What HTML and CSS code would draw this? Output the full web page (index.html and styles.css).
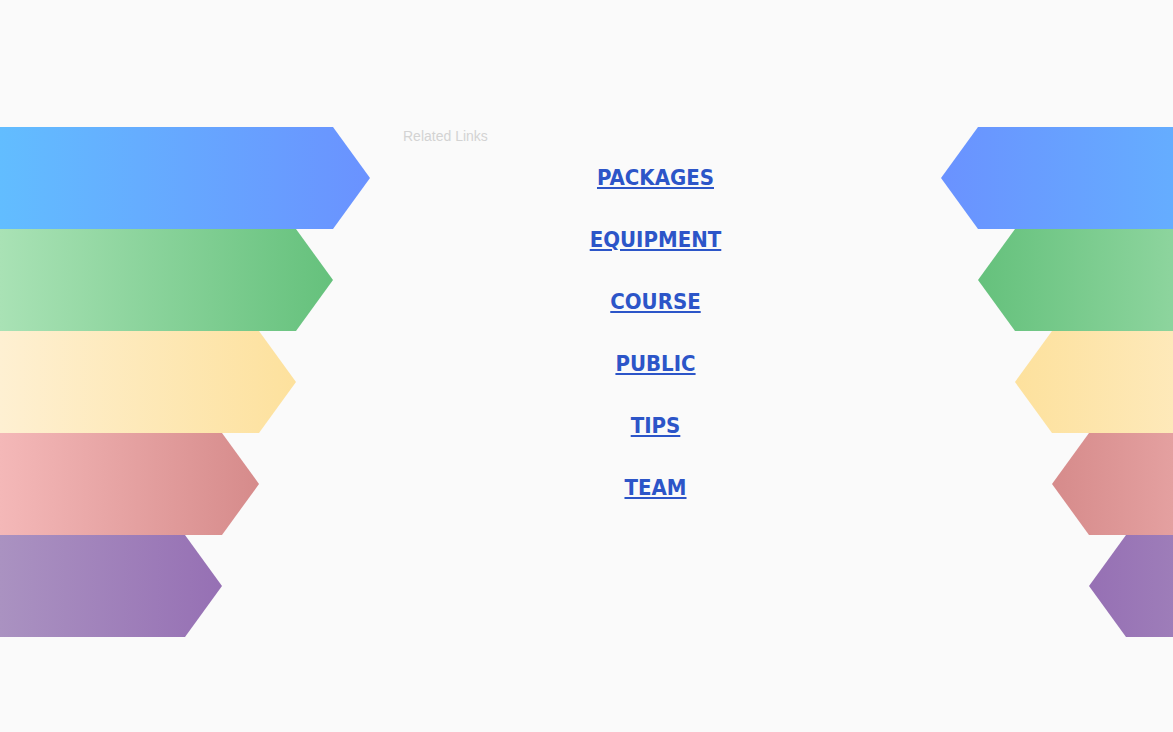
FILE: index.html
```html
<!DOCTYPE html>
<html lang="en">
<head>
<meta charset="utf-8">
<title>Related Links</title>
<link rel="stylesheet" href="styles.css">
</head>
<body>
<div class="page">
  <div class="bars bars-left">
    <div class="bar bar-l bar-w1 blue-l"></div>
    <div class="bar bar-l bar-w2 green-l"></div>
    <div class="bar bar-l bar-w3 yellow-l"></div>
    <div class="bar bar-l bar-w4 red-l"></div>
    <div class="bar bar-l bar-w5 purple-l"></div>
  </div>
  <div class="center">
    <div class="related">Related Links</div>
    <ul class="links">
      <li><a href="#">PACKAGES</a></li>
      <li><a href="#">EQUIPMENT</a></li>
      <li><a href="#">COURSE</a></li>
      <li><a href="#">PUBLIC</a></li>
      <li><a href="#">TIPS</a></li>
      <li><a href="#">TEAM</a></li>
    </ul>
  </div>
  <div class="bars bars-right">
    <div class="bar bar-r bar-w1 off1 blue-r"></div>
    <div class="bar bar-r bar-w2 off2 green-r"></div>
    <div class="bar bar-r bar-w3 off3 yellow-r"></div>
    <div class="bar bar-r bar-w4 off4 red-r"></div>
    <div class="bar bar-r bar-w5 off5 purple-r"></div>
  </div>
</div>
</body>
</html>
```
FILE: styles.css
```css
html, body {
  margin: 0;
  padding: 0;
  background: #fafafa;
}
.page {
  display: grid;
  grid-template-columns: 370px 571px 1fr;
  padding-top: 127px;
}
.bars {
  display: flex;
  flex-direction: column;
}
.bars-left { align-items: flex-start; }
.bars-right {
  align-items: flex-start;
  overflow: hidden;
}
.bar { height: 102px; flex-shrink: 0; }
.bar-w1 { width: 370px; }
.bar-w2 { width: 333px; }
.bar-w3 { width: 296px; }
.bar-w4 { width: 259px; }
.bar-w5 { width: 222px; }
.off1 { margin-left: 0; }
.off2 { margin-left: 37px; }
.off3 { margin-left: 74px; }
.off4 { margin-left: 111px; }
.off5 { margin-left: 148px; }
.bar-l {
  clip-path: polygon(0 0, calc(100% - 37px) 0, 100% 50%, calc(100% - 37px) 100%, 0 100%);
}
.bar-r {
  clip-path: polygon(37px 0, 100% 0, 100% 100%, 37px 100%, 0 50%);
}
.blue-l { background: linear-gradient(to right, #62bdff, #6a92ff); }
.green-l { background: linear-gradient(to right, #a9e2b5, #65c17c); }
.yellow-l { background: linear-gradient(to right, #fef0d2, #fde19d); }
.red-l { background: linear-gradient(to right, #f4b8b8, #d68b8b); }
.purple-l { background: linear-gradient(to right, #aa92c1, #9670b4); }
.blue-r { background: linear-gradient(to left, #62bdff, #6a92ff); }
.green-r { background: linear-gradient(to left, #a9e2b5, #65c17c); }
.yellow-r { background: linear-gradient(to left, #fef0d2, #fde19d); }
.red-r { background: linear-gradient(to left, #f4b8b8, #d68b8b); }
.purple-r { background: linear-gradient(to left, #aa92c1, #9670b4); }
.center {
  padding-left: 33px;
}
.related {
  font-family: "Liberation Sans", Arial, sans-serif;
  font-size: 14px;
  line-height: 19px;
  color: #d3d3d3;
}
.links {
  list-style: none;
  margin: 0 0 0 -33px;
  padding: 1px 0 0 0;
  text-align: center;
}
.links li {
  height: 62px;
  line-height: 62px;
}
.links a {
  font-family: "DejaVu Sans Condensed", "DejaVu Sans", Verdana, sans-serif;
  font-weight: bold;
  font-size: 22px;
  color: #2c55c8;
  text-decoration: underline;
}
```
